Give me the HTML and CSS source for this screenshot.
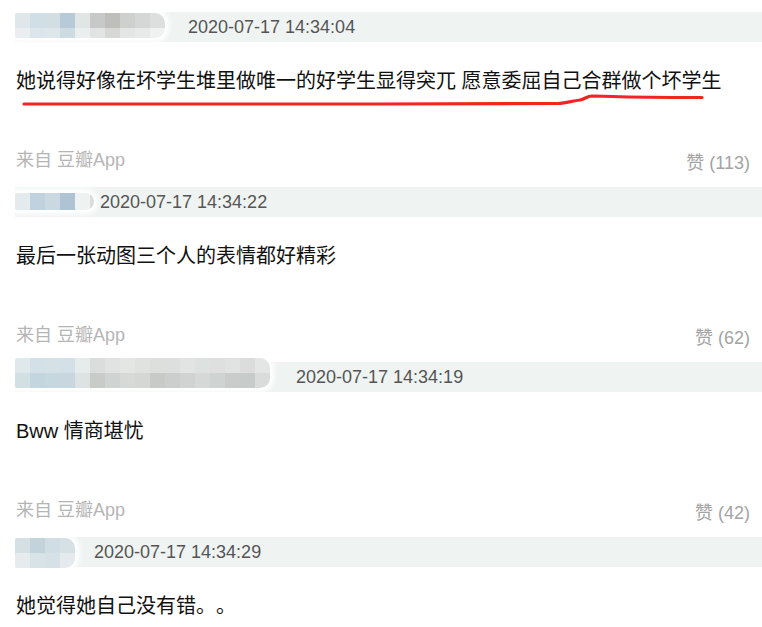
FILE: index.html
```html
<!DOCTYPE html>
<html lang="zh-CN">
<head>
<meta charset="utf-8">
<title>评论</title>
<link rel="stylesheet" href="styles.css">
</head>
<body>
<div class="page">
  <div class="item">
    <div class="bar"><div class="mosaic m1"></div><span class="time">2020-07-17 14:34:04</span></div>
    <p class="comment">她说得好像在坏学生堆里做唯一的好学生显得突兀 愿意委屈自己合群做个坏学生</p>
    <div class="meta"><span class="from">来自 豆瓣App</span><span class="like">赞 (113)</span></div>
  </div>
  <div class="item">
    <div class="bar"><div class="mosaic m2"></div><span class="time">2020-07-17 14:34:22</span></div>
    <p class="comment">最后一张动图三个人的表情都好精彩</p>
    <div class="meta"><span class="from">来自 豆瓣App</span><span class="like">赞 (62)</span></div>
  </div>
  <div class="item">
    <div class="bar"><div class="mosaic m3"></div><span class="time">2020-07-17 14:34:19</span></div>
    <p class="comment">Bww 情商堪忧</p>
    <div class="meta"><span class="from">来自 豆瓣App</span><span class="like">赞 (42)</span></div>
  </div>
  <div class="item">
    <div class="bar"><div class="mosaic m4"></div><span class="time">2020-07-17 14:34:29</span></div>
    <p class="comment">她觉得她自己没有错。。</p>
  </div>
  <svg class="scribble" width="762" height="627" viewBox="0 0 762 627">
    <path d="M24 104 L380 104 L558 103.5 C566 103 572 101 580 100 C585 99 587 96 592 96 L613 96.5 C640 97.5 670 97.5 702 97.5" fill="none" stroke="#f42424" stroke-width="3.2" stroke-linecap="round" stroke-linejoin="round"/>
  </svg>
</div>
</body>
</html>
```

FILE: styles.css
```css
html, body {
  margin: 0;
  padding: 0;
  background: #ffffff;
}

.page {
  position: relative;
  width: 762px;
  height: 627px;
  overflow: hidden;
  padding-top: 12px;
  box-sizing: border-box;
  font-family: "Liberation Sans", "Noto Sans CJK SC", sans-serif;
  text-spacing-trim: space-all;
}

.item {
  padding: 0 12px 0 16px;
  margin-bottom: 15px;
}

.bar {
  display: flex;
  align-items: center;
  height: 30px;
  margin: 0 -12px 0 -1px;
  background: #eff4f2;
}

.time {
  font-size: 18px;
  color: #555555;
  line-height: 30px;
  white-space: nowrap;
}

.mosaic {
  flex: none;
  border-radius: 2px 10px 10px 2px;
  box-shadow: 0 0 5px 4px #ffffff;
  background-color: #ffffff;
}

.m1 {
  width: 150px;
  height: 25px;
  margin: 0 23px 3px 0;
  background-image:
    linear-gradient(to right, #dfe7ea 0 15px, #d0dee5 15px 30px, #d2dee4 30px 45px, #b6cad7 45px 60px, #e1e6e5 60px 75px, #c6c9c7 75px 90px, #bebfbb 90px 105px, #cdd0cd 105px 120px, #d4d7d5 120px 135px, #dcdfdd 135px 150px),
    linear-gradient(to right, #eaeef0 0 15px, #dce5ea 15px 30px, #dde6ea 30px 45px, #cddbe3 45px 60px, #eaeeee 60px 75px, #e2e4e3 75px 90px, #d7d8d6 90px 105px, #e4e6e5 105px 120px, #e8eae9 120px 135px, #f0f1f0 135px 150px);
  background-size: 100% 15px, 100% 10px;
  background-position: 0 0, 0 15px;
  background-repeat: no-repeat;
}

.m2 {
  width: 79px;
  height: 17px;
  margin: 0 6px 1px 0;
  background-image:
    linear-gradient(to right, #e3ebed 0 15px, #c0d2de 15px 30px, #c9d8e1 30px 45px, #aec4d5 45px 60px, #eef2f1 60px 75px, #dadcdb 75px 79px);
  background-size: 100% 100%;
  background-repeat: no-repeat;
}

.m3 {
  width: 255px;
  height: 30px;
  margin: 0 26px 8px 0;
  background-image:
    linear-gradient(to right, #dfe8eb 0 15px, #d3e0e8 15px 30px, #d6e1e7 30px 45px, #d3e0e8 45px 60px, #e6eceb 60px 75px, #dadddb 75px 90px, #e0e3e1 90px 105px, #e3e6e3 105px 120px, #e0e2df 120px 135px, #dcdfdb 135px 150px, #dcdfdd 150px 165px, #e1e4e3 165px 180px, #dde1e0 180px 195px, #dde0df 195px 210px, #e0e3e2 210px 225px, #dadddb 225px 240px, #e4e6e5 240px 255px),
    linear-gradient(to right, #d2dfe3 0 15px, #c3d5df 15px 30px, #c6d7e0 30px 45px, #c8d6e0 45px 60px, #dde3e3 60px 75px, #c9cbc8 75px 90px, #cfd3d1 90px 105px, #d6d9d6 105px 120px, #d4d7d4 120px 135px, #c7cac7 135px 150px, #cbcecc 150px 165px, #d0d3d1 165px 180px, #d5d8d6 180px 195px, #cfd3d1 195px 210px, #c9ccca 210px 225px, #c7cbc9 225px 240px, #d9dcdb 240px 255px);
  background-size: 100% 15px, 100% 15px;
  background-position: 0 0, 0 15px;
  background-repeat: no-repeat;
}

.m4 {
  width: 60px;
  height: 30px;
  margin: 2px 19px 0 0;
  background-image:
    linear-gradient(to right, #d5e0e5 0 15px, #c3d3dc 15px 30px, #d0dde4 30px 45px, #d6e1e5 45px 60px),
    linear-gradient(to right, #e6ecee 0 15px, #d8e3e8 15px 30px, #d6e1e7 30px 45px, #e4eaed 45px 60px);
  background-size: 100% 15px, 100% 15px;
  background-position: 0 0, 0 15px;
  background-repeat: no-repeat;
}

.comment {
  margin: 24px 0 0 0;
  font-size: 20px;
  line-height: 30px;
  color: #111111;
  white-space: nowrap;
}

.meta {
  display: flex;
  justify-content: space-between;
  align-items: flex-start;
  margin-top: 52px;
  height: 24px;
  font-size: 18px;
  line-height: 24px;
}

.from {
  color: #b5b5b5;
}

.like {
  color: #a3a3a3;
  padding-top: 3px;
}

.scribble {
  position: absolute;
  left: 0;
  top: 0;
  pointer-events: none;
}
```
